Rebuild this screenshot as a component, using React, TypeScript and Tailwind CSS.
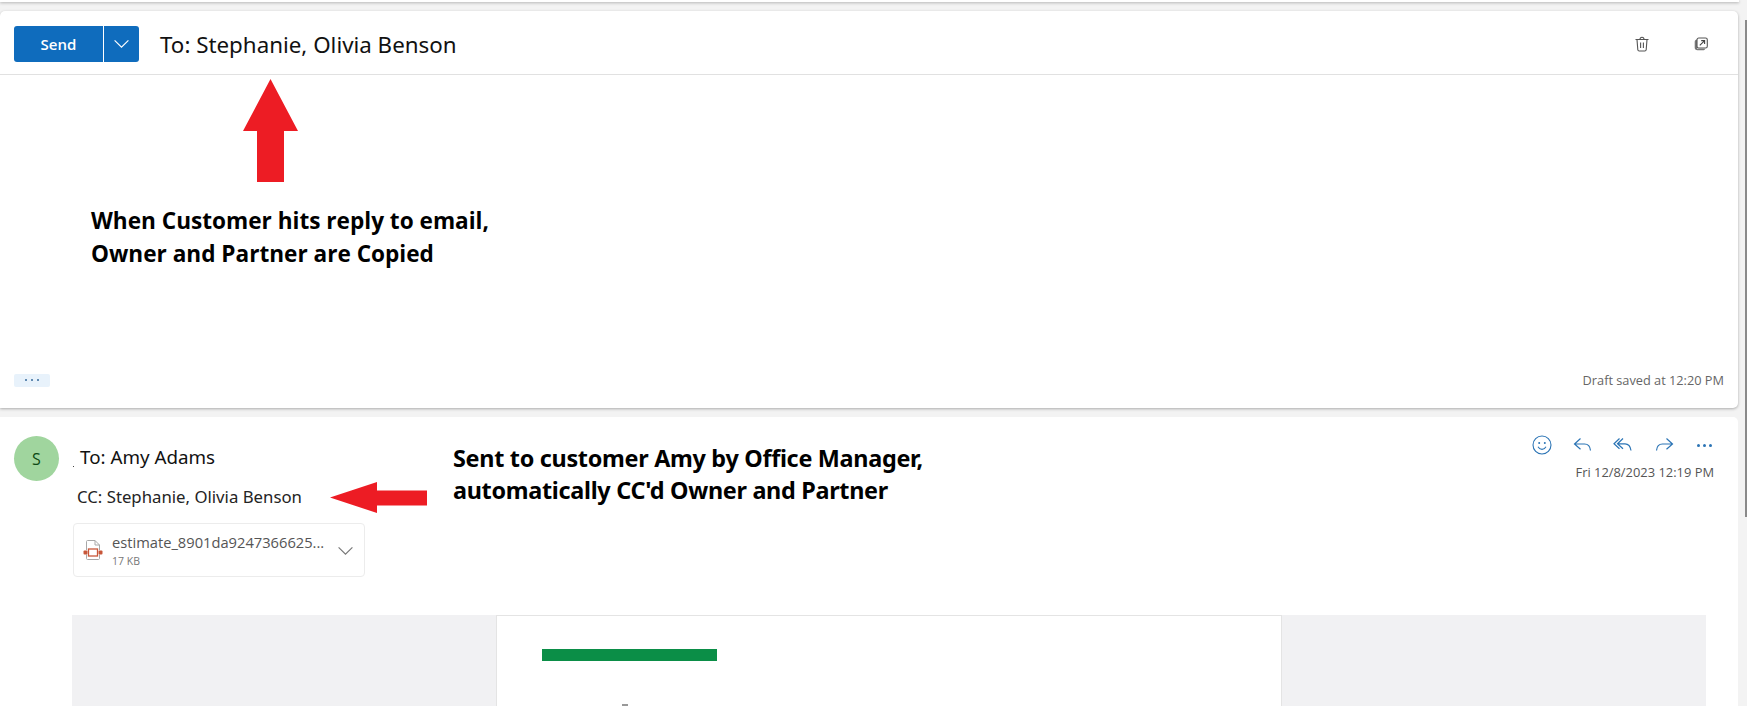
import React from "react";

const Trash = () => (
  <svg width="16" height="16" viewBox="0 0 16 16" fill="none" stroke="#555" strokeWidth="1.1">
    <path d="M1.500 3.500h13M3 3.500l.8 10.200c.1.800.6 1.300 1.400 1.300h5.600c.8 0 1.300-.5 1.400-1.300L13 3.500M6 3.500c0-1.200.8-2.200 2-2.200s2 1 2 2.200M6.600 6.500v5.500M9.400 6.500v5.500" />
  </svg>
);
const Popout = () => (
  <svg width="14" height="14" viewBox="0 0 14 14" fill="none">
    <path d="M3 2.500C1.500 2.800.7 3.600.7 5v5.500c0 1.700 1 2.800 2.800 2.800H9c1 0 1.800-.5 2.200-1.500H3.400C3 11.800 3 11.400 3 11Z" fill="#777" />
    <rect x="3" y="1" width="10.300" height="10" rx="1.800" fill="#fff" stroke="#555" strokeWidth="1.100" />
    <path d="M5.800 8.400 10.400 3.800M7.200 3.600h3.400V7" stroke="#444" strokeWidth="1.100" />
  </svg>
);
const Smile = () => (
  <svg width="20" height="20" viewBox="0 0 20 20" fill="none" stroke="#2b74b5" strokeWidth="1.1">
    <circle cx="10" cy="10" r="9" />
    <path d="M6 11.800c1 1.800 2.400 2.600 4 2.600s3-.8 4-2.600" />
    <circle cx="7.200" cy="8" r="1" fill="#2b74b5" stroke="none" />
    <circle cx="12.800" cy="8" r="1" fill="#2b74b5" stroke="none" />
  </svg>
);
const Reply = () => (
  <svg width="20" height="20" viewBox="0 0 20 20" fill="none" stroke="#2b74b5" strokeWidth="1.2">
    <path d="M7.500 3.500 1.500 9l6 5.300M1.500 9h10c3.400 0 5.600 2.300 6 6.500" />
  </svg>
);
const ReplyAll = () => (
  <svg width="20" height="20" viewBox="0 0 20 20" fill="none" stroke="#2b74b5" strokeWidth="1.2">
    <path d="M6.500 3.500 1 8.800l5.500 5M10 3.500 4.500 8.800l5.500 5M4.500 8.800H12c3.400 0 5.400 2.500 6 6.700" />
  </svg>
);
const Forward = () => (
  <svg width="20" height="20" viewBox="0 0 20 20" fill="none" stroke="#2b74b5" strokeWidth="1.2">
    <path d="M12.500 3.500 18.500 9l-6 5.300M18.500 9h-10c-3.400 0-5.600 2.300-6 6.500" />
  </svg>
);
const Chevron = ({ color, size }: { color: string; size: number }) => (
  <svg width={size} height={size} viewBox="0 0 16 16" fill="none" stroke={color} strokeWidth="1.1">
    <path d="M1.500 5 8 11.500 14.500 5" />
  </svg>
);
const FileIcon = () => (
  <svg width="20" height="22" viewBox="0 0 20 22" fill="none">
    <path d="M3.500 11V2.500c0-.6.4-1 1-1h7.500l4.500 4.500V11" stroke="#a8a8a8" strokeWidth="1" />
    <path d="M12 1.500V6h4.500" stroke="#a8a8a8" strokeWidth="1" />
    <path d="M3.500 15.500v4c0 .6.400 1 1 1h11c.6 0 1-.4 1-1v-4" stroke="#a8a8a8" strokeWidth="1" />
    <rect x="5.500" y="10" width="9" height="7" fill="#fff" stroke="#c8573a" strokeWidth="1.300" />
    <rect x="0.500" y="11.500" width="4" height="4" rx="1" fill="#c8573a" />
    <rect x="15.500" y="11.500" width="4" height="4" rx="1" fill="#c8573a" />
  </svg>
);
const UpArrow = () => (
  <svg width="55" height="103" viewBox="0 0 55 103" fill="#ed1c24">
    <polygon points="27.500,0 55,52 41,52 41,103 14,103 14,52 0,52" />
  </svg>
);
const LeftArrow = () => (
  <svg width="97" height="31" viewBox="0 0 97 31" fill="#ed1c24">
    <polygon points="0,15.500 47,0 47,8.500 97,8.500 97,23.500 47,23.500 47,31" />
  </svg>
);

export default function App() {
  const noto = "font-['Noto_Sans','Open_Sans',sans-serif]";
  return (
    <div className="relative h-[706px] w-[1747px] overflow-hidden bg-[#f3f3f3] font-['Open_Sans','Noto_Sans',sans-serif]">
      <div className="h-[2px] w-[1739px] bg-white shadow-[0_1px_3px_rgba(0,0,0,0.3)]" />
      <div className="absolute right-0 top-[20px] h-[497px] w-[2px] bg-[#8a8a8a]" />
      <div className="flex h-[704px] flex-col">
        <section className="mt-[9px] flex h-[397px] w-[1738px] shrink-0 flex-col rounded-r-[5px] rounded-tl-[5px] bg-white shadow-[0_1px_3px_rgba(0,0,0,0.3)]">
          <header className="flex h-[64px] shrink-0 items-center border-b border-[#e1e1e1] pl-[14px] pr-[30px] pt-[2px]">
            <div className="flex h-[36px] w-[125px] overflow-hidden rounded-[3px] bg-[#0f6cbd] text-white">
              <span className="flex w-[90px] items-center justify-center border-r border-white pt-[1px] text-[15px] font-semibold">Send</span>
              <span className="flex flex-1 items-center justify-center"><Chevron color="#fff" size={17} /></span>
            </div>
            <h1 className={`ml-[21px] mt-[3px] flex-1 text-[22.35px] font-normal text-[#111] ${noto}`}>To: Stephanie, Olivia Benson</h1>
            <div className="flex items-center gap-[44px]">
              <Trash />
              <Popout />
            </div>
          </header>
          <div className="flex flex-1 flex-col">
            <div className="ml-[243px] mt-[4px]"><UpArrow /></div>
            <p className="ml-[91px] mt-[22px] text-[22.6px] font-bold leading-[33px] text-black">
              When Customer hits reply to email,<br />Owner and Partner are Copied
            </p>
          </div>
          <footer className="flex items-center justify-between pb-[18px] pl-[14px] pr-[14px]">
            <div className="flex h-[13px] w-[36px] items-center justify-center gap-[4px] rounded-[2px] bg-[#e8f2fb]">
              <i className="size-[2px] rounded-full bg-[#36699a]" />
              <i className="size-[2px] rounded-full bg-[#36699a]" />
              <i className="size-[2px] rounded-full bg-[#36699a]" />
            </div>
            <span className="text-[12.75px] text-[#666]">Draft saved at 12:20 PM</span>
          </footer>
        </section>
        <section className="mt-[9px] flex w-[1738px] flex-1 flex-col rounded-tr-[5px] bg-white pl-[14px]">
          <div className="relative mr-[24px] flex">
            <div className="mt-[19px] flex size-[45px] shrink-0 items-center justify-center rounded-full bg-[#a0d59e] text-[16px] text-[#0c4a14]">S</div>
            <div className={`ml-[14px] flex-1 ${noto}`}>
              <div className="ml-[7px] mt-[28px] text-[18.8px] leading-[24px] text-[#111]">To: Amy Adams</div>
              <div className="ml-[4px] mt-[16px] text-[16.75px] leading-[24px] text-[#242424]">CC: Stephanie, Olivia Benson</div>
              <div className="mt-[14px] flex h-[54px] w-[292px] items-center rounded-[4px] border border-[#ececec] pl-[9px] pr-[10px]">
                <FileIcon />
                <div className="ml-[9px] flex-1 font-['Open_Sans','Noto_Sans',sans-serif]">
                  <div className="text-[14.7px] leading-[19px] text-[#555]">estimate_8901da9247366625...</div>
                  <div className="mt-[2px] text-[10.5px] leading-[14px] text-[#777]">17 KB</div>
                </div>
                <Chevron color="#777" size={17} />
              </div>
            </div>
            <div className="absolute left-[59px] top-[49px] size-[1px] bg-[#444]" />
            <div className="absolute left-[316px] top-[25px] flex items-start gap-[26px]">
              <div className="mt-[40px]"><LeftArrow /></div>
              <p className={`w-[520px] text-[23.4px] font-bold leading-[32px] tracking-[-0.3px] text-black ${noto}`}>
                Sent to customer Amy by Office Manager,<br />automatically CC'd Owner and Partner
              </p>
            </div>
            <div className="mt-[18px] flex flex-col items-end">
              <div className="flex items-center gap-[20.5px]">
                <Smile /><Reply /><ReplyAll /><Forward />
                <div className="flex w-[20px] justify-center gap-[3px]">
                  <i className="size-[3px] rounded-full bg-[#2b74b5]" />
                  <i className="size-[3px] rounded-full bg-[#2b74b5]" />
                  <i className="size-[3px] rounded-full bg-[#2b74b5]" />
                </div>
              </div>
              <div className="mt-[8px] text-[12.9px] text-[#555]">Fri 12/8/2023 12:19 PM</div>
            </div>
          </div>
          <div className="ml-[58px] mt-[38px] flex h-[200px] w-[1634px] justify-center bg-[#f1f1f3]">
            <div className="w-[786px] border border-[#e4e4e4] bg-white pl-[45px] pt-[33px]">
              <div className="h-[12px] w-[175px] bg-[#0b8e47]" />
              <div className="ml-[80px] mt-[43px] h-[2px] w-[6px] bg-[#999]" />
            </div>
          </div>
        </section>
      </div>
    </div>
  );
}
